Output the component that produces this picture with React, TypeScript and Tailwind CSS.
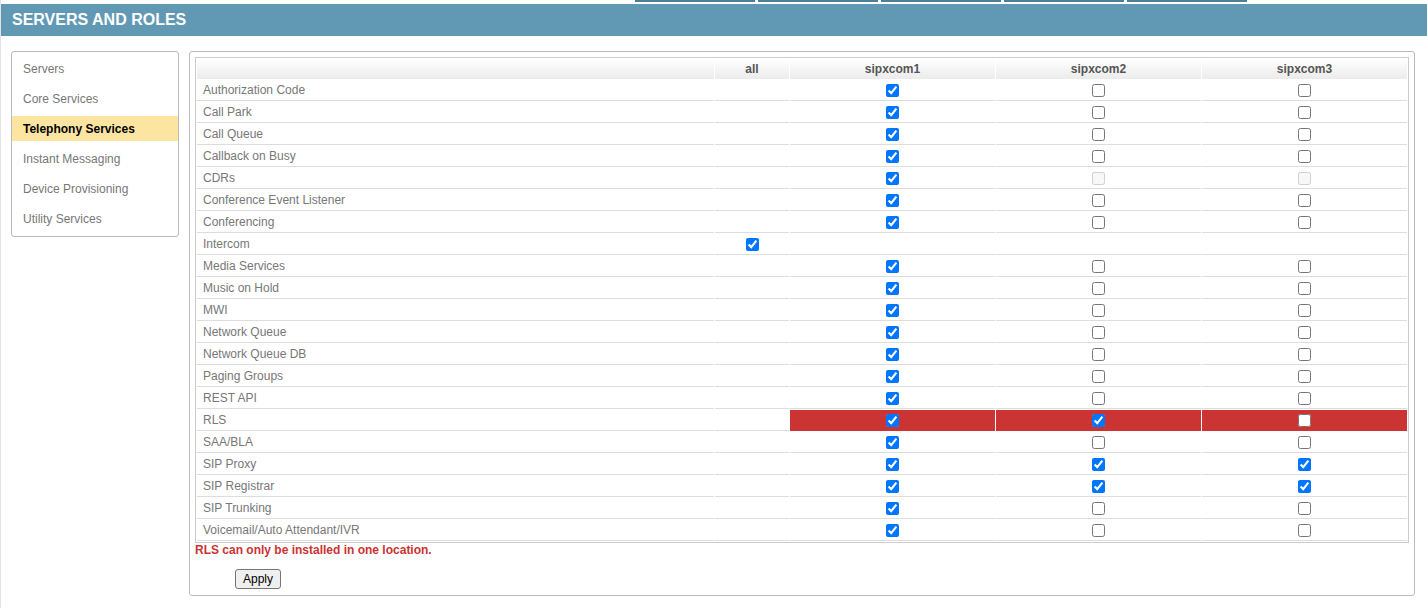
import React from "react";

type Cell = "c" | "u" | "d" | "n";
type Row = { name: string; all?: boolean; cols: Cell[]; red?: boolean };

const rows: Row[] = [
  { name: "Authorization Code", cols: ["c", "u", "u"] },
  { name: "Call Park", cols: ["c", "u", "u"] },
  { name: "Call Queue", cols: ["c", "u", "u"] },
  { name: "Callback on Busy", cols: ["c", "u", "u"] },
  { name: "CDRs", cols: ["c", "d", "d"] },
  { name: "Conference Event Listener", cols: ["c", "u", "u"] },
  { name: "Conferencing", cols: ["c", "u", "u"] },
  { name: "Intercom", all: true, cols: ["n", "n", "n"] },
  { name: "Media Services", cols: ["c", "u", "u"] },
  { name: "Music on Hold", cols: ["c", "u", "u"] },
  { name: "MWI", cols: ["c", "u", "u"] },
  { name: "Network Queue", cols: ["c", "u", "u"] },
  { name: "Network Queue DB", cols: ["c", "u", "u"] },
  { name: "Paging Groups", cols: ["c", "u", "u"] },
  { name: "REST API", cols: ["c", "u", "u"] },
  { name: "RLS", cols: ["c", "c", "u"], red: true },
  { name: "SAA/BLA", cols: ["c", "u", "u"] },
  { name: "SIP Proxy", cols: ["c", "c", "c"] },
  { name: "SIP Registrar", cols: ["c", "c", "c"] },
  { name: "SIP Trunking", cols: ["c", "u", "u"] },
  { name: "Voicemail/Auto Attendant/IVR", cols: ["c", "u", "u"] },
];

const menu = [
  "Servers",
  "Core Services",
  "Telephony Services",
  "Instant Messaging",
  "Device Provisioning",
  "Utility Services",
];

function Box({ v }: { v: Cell }) {
  if (v === "n") return null;
  return (
    <input
      type="checkbox"
      className="m-0 align-middle w-[13px] h-[13px]"
      defaultChecked={v === "c"}
      disabled={v === "d"}
      readOnly
    />
  );
}

export default function App() {
  return (
    <div
      className="w-[1427px] h-[608px] bg-white border-l border-[#e3e3e3] overflow-hidden"
      style={{ fontFamily: '"Liberation Sans", Arial, sans-serif' }}
    >
      <div className="h-[4px] flex pl-[634px] gap-[3px]">
        {[0, 1, 2, 3, 4].map((i) => (
          <div key={i} className="w-[120px] h-[2px] bg-[#4f7f96]" />
        ))}
      </div>
      <div className="h-[32px] bg-[#6199b4] flex items-center pl-[11px]">
        <span className="text-white font-bold text-[16px]">SERVERS AND ROLES</span>
      </div>
      <div className="flex items-start pt-[15px] pl-[10px] gap-[10px]">
        <div className="w-[168px] border border-[#bbbbbb] rounded-[3px] pt-[4px] pb-[5px] flex flex-col gap-[5px]">
          {menu.map((m) => (
            <div
              key={m}
              className={
                m === "Telephony Services"
                  ? "h-[25px] flex items-center pl-[11px] text-[12px] font-bold text-black bg-[#fbe5a1]"
                  : "h-[25px] flex items-center pl-[11px] text-[12px] text-[#777777]"
              }
            >
              {m}
            </div>
          ))}
        </div>
        <div className="w-[1226px] h-[545px] border border-[#bbbbbb] rounded-[3px] p-[5px]">
          <table className="w-full table-fixed border-separate border-spacing-[1px] border border-[#cccccc] text-[12px]">
            <colgroup>
              <col className="w-[517px]" />
              <col className="w-[74px]" />
              <col />
              <col />
              <col />
            </colgroup>
            <thead>
              <tr>
                {["", "all", "sipxcom1", "sipxcom2", "sipxcom3"].map((h, i) => (
                  <th
                    key={i}
                    className="h-[20px] p-0 text-center font-bold text-[#555555] bg-gradient-to-b from-white to-[#ebebeb]"
                  >
                    {h}
                  </th>
                ))}
              </tr>
            </thead>
            <tbody>
              {rows.map((r) => (
                <tr key={r.name}>
                  <td className="h-[21px] p-0 pl-[6px] text-[#777777] border-b border-[#dddddd] align-middle">
                    {r.name}
                  </td>
                  <td className="h-[21px] p-0 text-center border-b border-[#dddddd] align-middle">
                    {r.all ? <Box v="c" /> : null}
                  </td>
                  {r.cols.map((c, i) => (
                    <td
                      key={i}
                      className={
                        r.red
                          ? "h-[21px] p-0 text-center bg-[#cc3333] border-b border-[#cc3333] align-middle"
                          : "h-[21px] p-0 text-center border-b border-[#dddddd] align-middle"
                      }
                    >
                      <Box v={c} />
                    </td>
                  ))}
                </tr>
              ))}
            </tbody>
          </table>
          <div className="text-[12px] font-bold text-[#cc3333] leading-[14px]">
            RLS can only be installed in one location.
          </div>
          <div className="flex pt-[12px] pl-[40px]">
            <button className="h-[20px] w-[46px] text-[12px] text-black bg-[#efefef] border border-[#767676] rounded-[3px] leading-none flex items-center justify-center">
              Apply
            </button>
          </div>
        </div>
      </div>
    </div>
  );
}
